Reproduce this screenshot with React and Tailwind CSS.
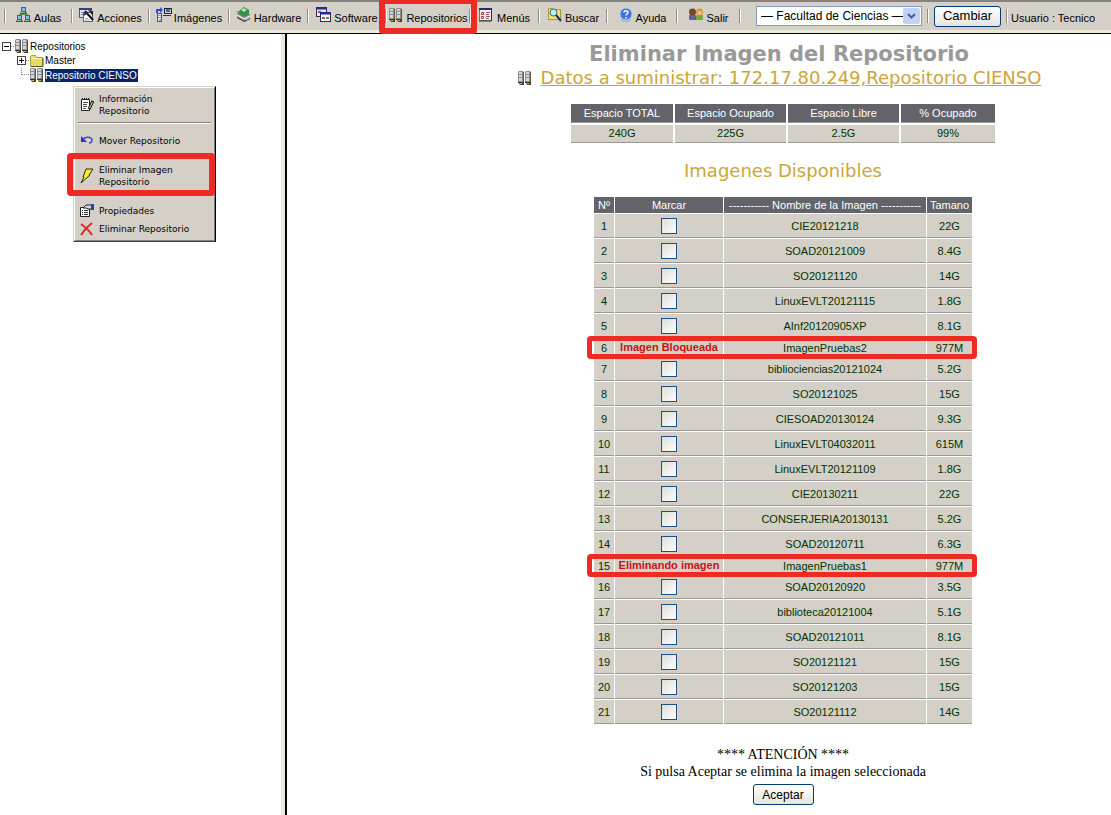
import React, { useState } from 'react';

const images = [
  { name: 'CIE20121218', size: '22G' },
  { name: 'SOAD20121009', size: '8.4G' },
  { name: 'SO20121120', size: '14G' },
  { name: 'LinuxEVLT20121115', size: '1.8G' },
  { name: 'AInf20120905XP', size: '8.1G' },
  { name: 'ImagenPruebas2', size: '977M', status: 'Imagen Bloqueada' },
  { name: 'bibliociencias20121024', size: '5.2G' },
  { name: 'SO20121025', size: '15G' },
  { name: 'CIESOAD20130124', size: '9.3G' },
  { name: 'LinuxEVLT04032011', size: '615M' },
  { name: 'LinuxEVLT20121109', size: '1.8G' },
  { name: 'CIE20130211', size: '22G' },
  { name: 'CONSERJERIA20130131', size: '5.2G' },
  { name: 'SOAD20120711', size: '6.3G' },
  { name: 'ImagenPruebas1', size: '977M', status: 'Eliminando imagen' },
  { name: 'SOAD20120920', size: '3.5G' },
  { name: 'biblioteca20121004', size: '5.1G' },
  { name: 'SOAD20121011', size: '8.1G' },
  { name: 'SO20121121', size: '15G' },
  { name: 'SO20121203', size: '15G' },
  { name: 'SO20121112', size: '14G' },
];

function Icon({ children }) {
  return (
    <svg className="h-4 w-4 shrink-0" viewBox="0 0 16 16" aria-hidden="true">
      {children}
    </svg>
  );
}

function Computer({ x, y }) {
  return (
    <g transform={`translate(${x} ${y})`}>
      <rect x="1" width="5" height="5" fill="#2f5fae" />
      <rect x="2" y="1" width="3" height="3" fill="#86bdf0" />
      <path d="M0 7V6l1-1h5l1 1v1z" fill="#3d5a50" />
      <path d="M1 5.500h4" stroke="#a9bd9a" />
    </g>
  );
}

const AulasIcon = () => (
  <Icon>
    <path d="M7.500 6v2M3.500 9V7.500h8V9" fill="none" stroke="#6f8a4a" />
    <Computer x={4} y={0} />
    <Computer x={0} y={8} />
    <Computer x={8} y={8} />
  </Icon>
);

const AccionesIcon = () => (
  <Icon>
    <rect x="0.500" y="1.500" width="11" height="9" fill="#dfe3f2" stroke="#4a5688" />
    <path d="M0 2h13" stroke="#31407f" strokeWidth="2" />
    <path d="M2 5.500h3M2 7.500h2" stroke="#7a86b4" />
    <rect x="4.500" y="5.500" width="9" height="9" fill="#fff" stroke="#5d6480" />
    <path d="M6 11.500h3M6 13h5" stroke="#a3abc6" />
    <path d="m6 4 8 9" stroke="#111" strokeWidth="2" />
    <path d="m9 3 5 1v5z" fill="#222" />
    <path d="m5 8 3-3" stroke="#333" strokeWidth="2" />
  </Icon>
);

const ImagenesIcon = () => (
  <Icon>
    <rect x="1.500" y="6.500" width="4" height="8" fill="#ececf0" stroke="#55555f" />
    <path d="M2 8.500h3M2 10.500h3" stroke="#999" />
    <path d="M3 13h2" stroke="#2b9b2b" />
    <path d="M1 6V3h4" fill="none" stroke="#2f49d8" strokeWidth="2" />
    <path d="m4 0 3 3-3 3z" fill="#2f49d8" />
    <rect x="8.500" y="1.500" width="7" height="5" fill="#c8ccd6" stroke="#222" />
    <rect x="10" y="2" width="4" height="3" fill="#4a63b8" />
    <path d="M7 8.500h8" stroke="#333" />
    <path d="M7 7.500h8" stroke="#ddd" />
  </Icon>
);

const HardwareIcon = () => (
  <Icon>
    <path d="M1 6 7 4l7 3v5l-5 3-8-4z" fill="#7d817b" />
    <path d="m1 8 7 4 6-3" fill="none" stroke="#e6e6e2" strokeWidth="1.500" />
    <path d="m1 10.500 7 4 6-3" fill="none" stroke="#3b3f3a" />
    <path d="m3 4 5-4 5 3v4L8 9 2 6z" fill="#2e9143" />
    <path d="m5 3 3-2 3 2-3 2z" fill="#b5e2b6" />
    <path d="M0 4.500h3" stroke="#8fa88f" />
    <path d="m10 13 3-2" stroke="#ddd" />
  </Icon>
);

const SoftwareIcon = () => (
  <Icon>
    <rect x="0.500" y="0.500" width="10" height="9" fill="#e9e4ea" stroke="#2e2e55" />
    <path d="M0 1.500h11" stroke="#27279a" strokeWidth="2" />
    <path d="M2 5h3" stroke="#d03a76" strokeWidth="2" />
    <rect x="4.500" y="5.500" width="10" height="9" fill="#f8f2f8" stroke="#2e2e55" />
    <path d="M4 6.500h11" stroke="#27279a" strokeWidth="2" />
    <path d="M6 11h3" stroke="#d9415a" strokeWidth="2" />
    <path d="M10 11h3" stroke="#39a655" strokeWidth="2" />
  </Icon>
);

function Server({ x }) {
  return (
    <g transform={`translate(${x} 0)`}>
      <path d="M0 2 1 1h4l1 1v10H0z" fill="#8e8e90" />
      <path d="M1 2h3v9H1z" fill="#d6d6d8" />
      <path d="M1 4.500h3M1 7.500h3" stroke="#8f8f92" />
      <path d="M5.500 2v10" stroke="#56565a" />
      <path d="M0 12h6v1H0z" fill="#333" />
      <path d="M1 13h5v2H2z" fill="#4a4720" />
      <path d="M2 13h2v1H2z" fill="#c9b94a" />
    </g>
  );
}

const ReposIcon = () => (
  <Icon>
    <Server x={1} />
    <Server x={8} />
  </Icon>
);

const MenusIcon = () => (
  <Icon>
    <rect x="0.500" y="1.500" width="12" height="12" fill="#f5f0f2" stroke="#77747a" />
    <path d="M0 2h13" stroke="#22306f" strokeWidth="2" />
    <path d="M12.500 2v12H0" fill="none" stroke="#333" />
    <path d="M2.500 5.500h2v2h-2zM2.500 9.500h2v2h-2z" fill="#fff" stroke="#c22a3a" />
    <path d="M7 5.500h4M7 7.500h3M7 9.500h4M7 11.500h3" stroke="#96525e" />
  </Icon>
);

const BuscarIcon = () => (
  <Icon>
    <path d="M1.500 1.500h4l1 1h7v10h-12z" fill="#efe272" stroke="#a19a3c" />
    <circle cx="6.500" cy="5.500" r="3.500" fill="#b9eef2" stroke="#3c6675" />
    <path d="m9 8 5 6" stroke="#1f2f63" strokeWidth="2" />
  </Icon>
);

const AyudaIcon = () => (
  <Icon>
    <ellipse cx="8" cy="13" rx="5" ry="2" fill="#a9b6d2" />
    <circle cx="8" cy="7" r="6" fill="#3f74d6" stroke="#b4c8ee" />
    <path d="M6 5.500c0-2.500 4-2.500 4 0C10 7 8 7 8 8.500M8 10v1.500" fill="none" stroke="#fff" strokeWidth="1.500" />
  </Icon>
);

const SalirIcon = () => (
  <Icon>
    <path d="M1 12V9c0-2 7-2 7 0v4H2z" fill="#3f67c4" />
    <path d="M8 13V9c0-2 7-2 7 0v3l-1 1z" fill="#76a93a" />
    <circle cx="4.500" cy="5" r="3.500" fill="#7a4630" />
    <circle cx="11.500" cy="5" r="3.500" fill="#d99a3c" />
    <circle cx="11.500" cy="6" r="2" fill="#efc48c" />
    <path d="M3 9.500h3" stroke="#d0503c" />
  </Icon>
);

const InfoIcon = () => (
  <Icon>
    <path d="M2.500 2.500h8v11h-8z" fill="#fff" stroke="#222" />
    <path d="M3.500 1v2M5.500 1v2M7.500 1v2M9.500 1v2" stroke="#222" />
    <path d="M4 5.500h5M4 7.500h4M4 9.500h4M4 11.500h3" stroke="#555" />
    <path d="m14 4-4 8" stroke="#222" strokeWidth="3" />
    <path d="m13.500 5-3 6" stroke="#e5d96a" />
  </Icon>
);

const MoverIcon = () => (
  <Icon>
    <path d="M4 6c3-3 9-2 9 1 0 2-1 3-3 3" fill="none" stroke="#4448cc" strokeWidth="1.500" />
    <path d="M2 3v6h6z" fill="#2d31c4" />
  </Icon>
);

const RayoIcon = () => (
  <Icon>
    <path d="M7 1h7l-4 6h1L2 15l3-6H4z" fill="#f4ee28" stroke="#2b2a08" strokeLinejoin="round" />
  </Icon>
);

const PropiedadesIcon = () => (
  <Icon>
    <path d="M1.500 4.500h9v9h-9z" fill="#fff" stroke="#222" />
    <path d="M3 7.500h1M5 7.500h4M3 9.500h1M5 9.500h4M3 11.500h1M5 11.500h4" stroke="#333" />
    <path d="m4 5 3-3h6v4H9L7 5z" fill="#d8d8d8" stroke="#222" />
    <path d="M12 1h3v6h-3z" fill="#2d3fa8" />
  </Icon>
);

const BorrarIcon = () => (
  <Icon>
    <path d="M2 3c4 3 8 6 11 11" fill="none" stroke="#e0262b" strokeWidth="2" />
    <path d="M13 2C9 5 5 9 2 14" fill="none" stroke="#e0262b" strokeWidth="2" />
  </Icon>
);

const FolderIcon = () => (
  <Icon>
    <path d="M1.500 13.500v-10l1-1h4l1 2h6v9z" fill="#e6dd5e" stroke="#a39d4a" />
    <path d="M2 5.500h11" stroke="#f8f4b0" />
    <path d="M14 5v8.500H2" fill="none" stroke="#55533a" />
  </Icon>
);

function Toggle({ open }) {
  return (
    <svg className="h-[9px] w-[9px] shrink-0" viewBox="0 0 9 9" aria-hidden="true">
      <rect x="0.500" y="0.500" width="8" height="8" fill="#fff" stroke="#444" />
      <path d={open ? 'M2 4.500h5' : 'M2 4.500h5M4.500 2v5'} stroke="#000" />
    </svg>
  );
}

function Separator() {
  return <span className="h-[14px] w-[2px] shrink-0 border-l border-[#8d8a84] bg-white" />;
}

// Red frame drawn around the options being explained
function Highlight({ className }) {
  return (
    <span
      className={`pointer-events-none absolute z-10 rounded-[4px] border-[#ee2a24] ${className}`}
    />
  );
}

const toolbar = [
  { label: 'Aulas', icon: AulasIcon, width: 'w-[67px]' },
  { label: 'Acciones', icon: AccionesIcon, width: 'w-[77px]' },
  { label: 'Imágenes', icon: ImagenesIcon, width: 'w-[80px]' },
  { label: 'Hardware', icon: HardwareIcon, width: 'w-[79px]' },
  { label: 'Software', icon: SoftwareIcon, width: 'w-[78px]' },
  { label: 'Repositorios', icon: ReposIcon, width: 'w-[84px]', active: true },
  { label: 'Menús', icon: MenusIcon, width: 'w-[69px]' },
  { label: 'Buscar', icon: BuscarIcon, width: 'w-[68px]' },
  { label: 'Ayuda', icon: AyudaIcon, width: 'w-[70px]' },
  { label: 'Salir', icon: SalirIcon, width: 'w-[63px]' },
];

function Toolbar() {
  return (
    <header className="border-b border-black bg-[#d4d0c8]">
      <div className="flex h-[30px] items-center border-t-2 border-[#85817b] pl-1 text-[11px] whitespace-nowrap">
        {toolbar.map(({ label, icon: ItemIcon, width, active }) => (
          <div key={label} className={`relative flex shrink-0 items-center ${width}`}>
            <Separator />
            <button type="button" className="flex flex-1 items-center justify-center gap-[2px] pb-[2px]">
              <ItemIcon />
              <span className="pt-[6px]">{label}</span>
            </button>
            {active && <Highlight className="-top-[6px] -right-[8px] -bottom-[6px] -left-[6px] border-[6px]" />}
          </div>
        ))}
        <Separator />
        <div className="relative ml-[15px] h-5 w-[166px] shrink-0">
          <select
            aria-label="Centro"
            className="block h-5 w-full appearance-none border border-[#7f9db9] bg-white pl-1 font-['Liberation_Sans',Arial,sans-serif] text-[12px] leading-[18px]"
          >
            <option>— Facultad de Ciencias —</option>
          </select>
          <span className="pointer-events-none absolute top-[2px] right-[2px] flex h-4 w-[17px] items-center justify-center rounded-[2px] bg-[#c1d2fa]">
            <svg className="h-[7px] w-[9px]" viewBox="0 0 9 7" aria-hidden="true">
              <path d="m1 1 3.500 3.500L8 1" fill="none" stroke="#4d6185" strokeWidth="2" />
            </svg>
          </span>
        </div>
        <div className="ml-[5px] flex items-center">
          <Separator />
          <button
            type="button"
            className="mx-[5px] h-[21px] w-[67px] rounded-[3px] border border-[#003c74] bg-gradient-to-b from-white to-[#e6e5de] text-[13px] leading-[18px]"
          >
            Cambiar
          </button>
          <Separator />
          <span className="pt-1 pl-[3px]">Usuario : Tecnico</span>
        </div>
      </div>
      <div className="h-[3px] bg-[#ece9d8]" />
    </header>
  );
}

function Tree() {
  return (
    <ul className="pt-[5px] pl-[2px] text-[10px] leading-[13px]">
      <li>
        <div className="flex h-[14px] items-center">
          <Toggle open />
          <span className="w-[3px] border-t border-dotted border-[#888]" />
          <ReposIcon />
          <span>Repositorios</span>
        </div>
        <ul className="pl-[15px]">
          <li className="flex h-[15px] items-center">
            <Toggle />
            <span className="w-[3px] border-t border-dotted border-[#888]" />
            <FolderIcon />
            <span>Master</span>
          </li>
          <li className="flex h-[14px] items-center">
            <span className="ml-1 h-[7px] w-2 self-start border-b border-l border-dotted border-[#888]" />
            <ReposIcon />
            <span className="bg-[#0a246a] pr-px text-white">Repositorio CIENSO</span>
          </li>
        </ul>
      </li>
    </ul>
  );
}

function MenuItem({ icon: ItemIcon, className, children }) {
  return (
    <button type="button" className={`flex w-full items-center gap-1 pl-1 text-left ${className}`}>
      <ItemIcon />
      <span>{children}</span>
    </button>
  );
}

function ContextMenu() {
  return (
    <div className="absolute top-[52px] left-[73px] w-[143px] border border-t-[#d4d0c8] border-r-black border-b-[#404040] border-l-[#d4d0c8] font-['DejaVu_Sans',Verdana,sans-serif] text-[9px] leading-[12px]">
      <div className="border border-t-white border-r-[#808080] border-b-[#808080] border-l-white bg-[#d4d0c8] pb-[2px]">
        <MenuItem icon={InfoIcon} className="h-[34px]">
          Información
          <br />
          Repositorio
        </MenuItem>
        <div className="mx-[3px] border-t border-b border-t-[#808080] border-b-white" />
        <MenuItem icon={MoverIcon} className="h-[33px]">
          Mover Repositorio
        </MenuItem>
        <div className="relative">
          <MenuItem icon={RayoIcon} className="h-[38px]">
            Eliminar Imagen
            <br />
            Repositorio
          </MenuItem>
          <Highlight className="-top-1 -right-px -bottom-px -left-2 border-[6px]" />
        </div>
        <MenuItem icon={PropiedadesIcon} className="mt-[7px] h-[18px]">
          Propiedades
        </MenuItem>
        <MenuItem icon={BorrarIcon} className="h-[18px]">
          Eliminar Repositorio
        </MenuItem>
      </div>
    </div>
  );
}

function SpaceTable() {
  return (
    <table className="mt-3 border-separate border-spacing-[2px] text-center text-[11px] leading-[13px]">
      <thead>
        <tr className="h-[19px] bg-[#62646a] text-white">
          <th className="w-[102px] border-b border-[#999] p-0 font-normal">Espacio TOTAL</th>
          <th className="w-[111px] border-b border-[#999] p-0 font-normal">Espacio Ocupado</th>
          <th className="w-[111px] border-b border-[#999] p-0 font-normal">Espacio Libre</th>
          <th className="w-[94px] border-b border-[#999] p-0 font-normal">% Ocupado</th>
        </tr>
      </thead>
      <tbody>
        <tr className="h-[18px] bg-[#d4d0c8] text-[#003300]">
          <td className="border-b border-[#999] p-0">240G</td>
          <td className="border-b border-[#999] p-0">225G</td>
          <td className="border-b border-[#999] p-0">2.5G</td>
          <td className="border-b border-[#999] p-0">99%</td>
        </tr>
      </tbody>
    </table>
  );
}

function ImagesTable() {
  const [selected, setSelected] = useState([]);

  const toggle = (name) => {
    setSelected((prev) =>
      prev.includes(name) ? prev.filter((item) => item !== name) : [...prev, name]
    );
  };

  return (
    <table className="mt-[13px] border-separate border-spacing-px text-center text-[11px] leading-[13px] whitespace-nowrap">
      <thead>
        <tr className="h-4 bg-[#62646a] text-white">
          <th className="w-5 p-0 font-normal">Nº</th>
          <th className="w-[108px] p-0 font-normal">Marcar</th>
          <th className="w-[202px] p-0 font-normal">----------- Nombre de la Imagen -----------</th>
          <th className="w-[45px] p-0 font-normal">Tamano</th>
        </tr>
      </thead>
      <tbody>
        {images.map(({ name, size, status }, index) => (
          <tr
            key={name}
            className={`relative bg-[#d4d0c8] text-[#003300] ${status ? 'h-[17px]' : 'h-6'}`}
          >
            <td className="border-b border-[#999] p-0 pt-[2px]">
              {index + 1}
              {status && <Highlight className="-inset-y-[3px] -right-[5px] -left-[7px] border-[5px]" />}
            </td>
            <td className="border-b border-[#999] p-0">
              {status ? (
                <b className="text-[#cc1111]">{status}</b>
              ) : (
                <input
                  type="checkbox"
                  aria-label={`Marcar ${name}`}
                  checked={selected.includes(name)}
                  onChange={() => toggle(name)}
                  className="mx-auto block h-4 w-4 appearance-none border border-[#1c5180] bg-gradient-to-br from-[#dcdcd7] to-white checked:bg-[#1c5180] checked:bg-none"
                />
              )}
            </td>
            <td className="border-b border-[#999] p-0 pt-[2px]">{name}</td>
            <td className="border-b border-[#999] p-0 pt-[2px]">{size}</td>
          </tr>
        ))}
      </tbody>
    </table>
  );
}

function App() {
  return (
    <div className="flex min-h-screen flex-col overflow-hidden bg-white font-['Liberation_Sans',Arial,sans-serif] text-black">
      <Toolbar />
      <div className="flex flex-1">
        <aside className="relative w-[281px] shrink-0">
          <Tree />
          <ContextMenu />
        </aside>
        <div className="w-[6px] shrink-0 border-r-2 border-black bg-[#ece9d8]" />
        <main className="flex flex-1 flex-col items-center pt-2 pb-2 pl-[168px]">
          <div className="flex flex-col items-center pr-2 font-['DejaVu_Sans',Verdana,sans-serif] leading-6 whitespace-nowrap">
            <h1 className="text-[21px] leading-6 font-bold text-[#999999]">
              Eliminar Imagen del Repositorio
            </h1>
            <div className="flex items-center gap-2 text-[18px] leading-6 text-[#cca53a]">
              <ReposIcon />
              <a href="#datos" className="underline">
                Datos a suministrar: 172.17.80.249,Repositorio CIENSO
              </a>
            </div>
          </div>
          <SpaceTable />
          <h2 className="mt-[14px] font-['DejaVu_Sans',Verdana,sans-serif] text-[18px] leading-6 text-[#cca53a]">
            Imagenes Disponibles
          </h2>
          <ImagesTable />
          <p className="mt-[21px] text-center font-['Liberation_Serif','Times_New_Roman',serif] text-[14px] leading-[17px]">
            **** ATENCIÓN ****
            <br />
            Si pulsa Aceptar se elimina la imagen seleccionada
          </p>
          <button
            type="button"
            className="mt-1 h-[21px] w-[61px] rounded-[3px] border border-[#003c74] bg-gradient-to-b from-white to-[#e6e5de] text-[12px] leading-[18px]"
          >
            Aceptar
          </button>
        </main>
      </div>
    </div>
  );
}

export default App;
